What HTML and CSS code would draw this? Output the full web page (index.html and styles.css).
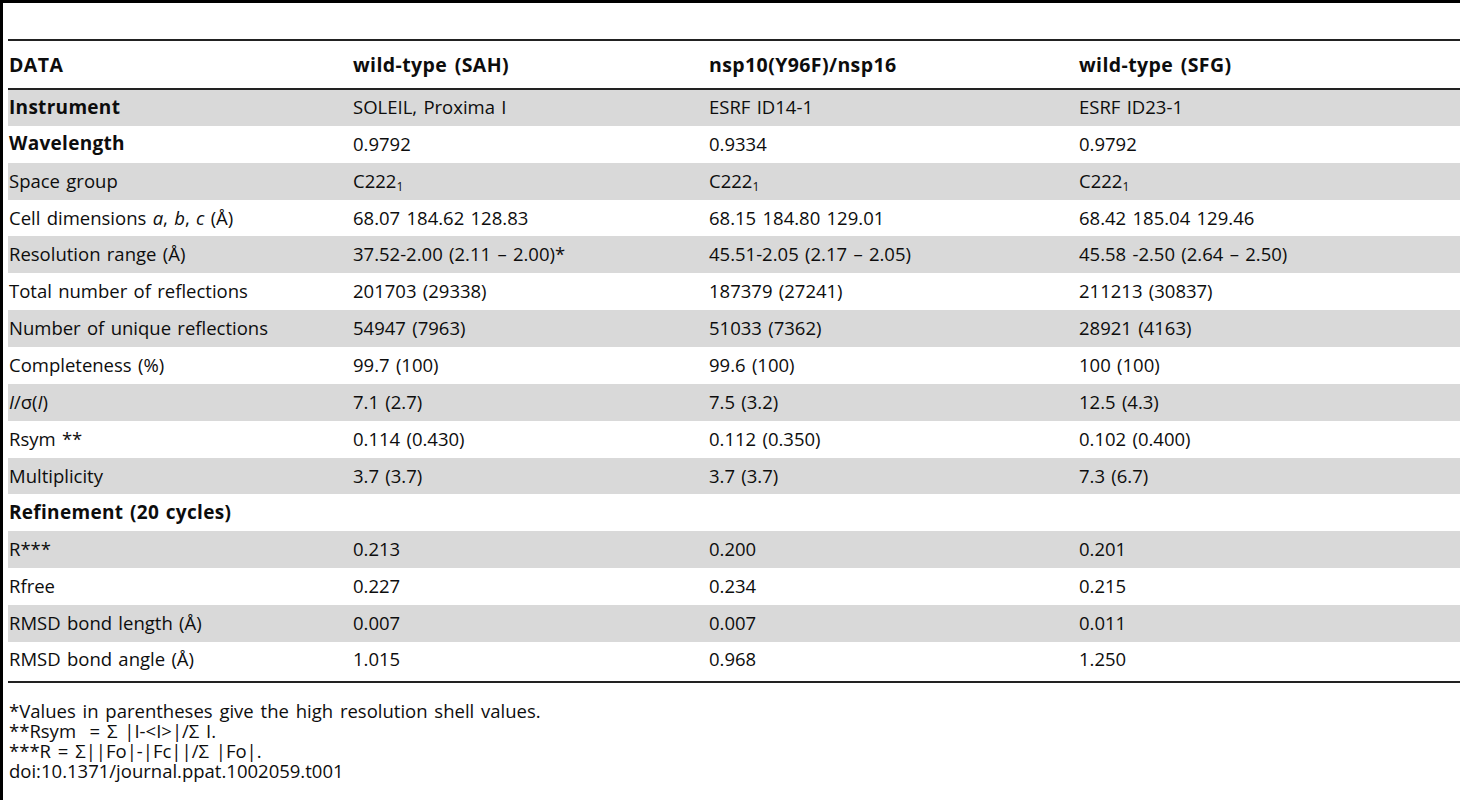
FILE: index.html
```html
<!DOCTYPE html>
<html>
<head>
<meta charset="utf-8">
<link rel="stylesheet" href="styles.css">
</head>
<body>
<div class="frame">
  <table class="data">
    <colgroup>
      <col class="c1"><col class="c2"><col class="c3"><col class="c4">
    </colgroup>
    <thead>
      <tr><th>DATA</th><th>wild-type (SAH)</th><th>nsp10(Y96F)/nsp16</th><th>wild-type (SFG)</th></tr>
    </thead>
    <tbody>
      <tr><td class="b">Instrument</td><td>SOLEIL, Proxima I</td><td>ESRF ID14-1</td><td>ESRF ID23-1</td></tr>
      <tr><td class="b">Wavelength</td><td>0.9792</td><td>0.9334</td><td>0.9792</td></tr>
      <tr><td>Space group</td><td>C222<sub>1</sub></td><td>C222<sub>1</sub></td><td>C222<sub>1</sub></td></tr>
      <tr><td>Cell dimensions <i>a</i>, <i>b</i>, <i>c</i> (Å)</td><td>68.07 184.62 128.83</td><td>68.15 184.80 129.01</td><td>68.42 185.04 129.46</td></tr>
      <tr><td>Resolution range (Å)</td><td>37.52-2.00 (2.11 – 2.00)*</td><td>45.51-2.05 (2.17 – 2.05)</td><td>45.58 -2.50 (2.64 – 2.50)</td></tr>
      <tr><td>Total number of reflections</td><td>201703 (29338)</td><td>187379 (27241)</td><td>211213 (30837)</td></tr>
      <tr><td>Number of unique reflections</td><td>54947 (7963)</td><td>51033 (7362)</td><td>28921 (4163)</td></tr>
      <tr><td>Completeness (%)</td><td>99.7 (100)</td><td>99.6 (100)</td><td>100 (100)</td></tr>
      <tr><td><i>I</i>/σ(<i>I</i>)</td><td>7.1 (2.7)</td><td>7.5 (3.2)</td><td>12.5 (4.3)</td></tr>
      <tr><td>Rsym **</td><td>0.114 (0.430)</td><td>0.112 (0.350)</td><td>0.102 (0.400)</td></tr>
      <tr><td>Multiplicity</td><td>3.7 (3.7)</td><td>3.7 (3.7)</td><td>7.3 (6.7)</td></tr>
      <tr><td class="b">Refinement (20 cycles)</td><td></td><td></td><td></td></tr>
      <tr><td>R***</td><td>0.213</td><td>0.200</td><td>0.201</td></tr>
      <tr><td>Rfree</td><td>0.227</td><td>0.234</td><td>0.215</td></tr>
      <tr><td>RMSD bond length (Å)</td><td>0.007</td><td>0.007</td><td>0.011</td></tr>
      <tr class="last"><td>RMSD bond angle (Å)</td><td>1.015</td><td>0.968</td><td>1.250</td></tr>
    </tbody>
  </table>
  <div class="notes">
    <p>*Values in parentheses give the high resolution shell values.</p>
    <p>**Rsym&nbsp; = Σ |I-&lt;I&gt;|/Σ I.</p>
    <p>***R = Σ||Fo|-|Fc||/Σ |Fo|.</p>
    <p>doi:10.1371/journal.ppat.1002059.t001</p>
  </div>
</div>
</body>
</html>
```
FILE: styles.css
```css
html, body {
  margin: 0;
  padding: 0;
  background: #fff;
}
body {
  font-family: "Open Sans", "Noto Sans", sans-serif;
  font-size: 18.5px;
  word-spacing: 1.5px;
  color: #0d0d0d;
}
.frame {
  border-left: 3px solid #000;
  border-top: 3px solid #000;
  padding-left: 5px;
  box-sizing: border-box;
  height: 800px;
}
.data {
  width: 1452px;
  border-collapse: collapse;
  margin-top: 36px;
  border-top: 2px solid #222;
  border-bottom: 2px solid #222;
  table-layout: fixed;
}
.c1 { width: 344px; }
.c2 { width: 356px; }
.c3 { width: 370px; }
.data th {
  height: 46px;
  border-bottom: 2px solid #222;
  text-align: left;
  font-weight: 700;
  font-size: 19.5px;
  letter-spacing: 0.4px;
  word-spacing: 2px;
  padding: 0 0 1px 1px;
  vertical-align: middle;
}
.data td {
  height: 36.87px;
  padding: 0 0 2px 1px;
  box-sizing: border-box;
  vertical-align: middle;
  white-space: nowrap;
}
.data tr.last td {
  height: 40px;
  padding-bottom: 6px;
}
.data tbody tr:nth-child(odd) { background: #d9d9d9; }
.data td.b {
  font-weight: 700;
  font-size: 19px;
  letter-spacing: 0.3px;
}
sub {
  font-size: 12px;
  vertical-align: -3px;
  line-height: 0;
}
.notes {
  margin-top: 18px;
  padding-left: 1px;
  word-spacing: 2px;
}
.notes p {
  margin: 0;
  line-height: 20px;
}
```
